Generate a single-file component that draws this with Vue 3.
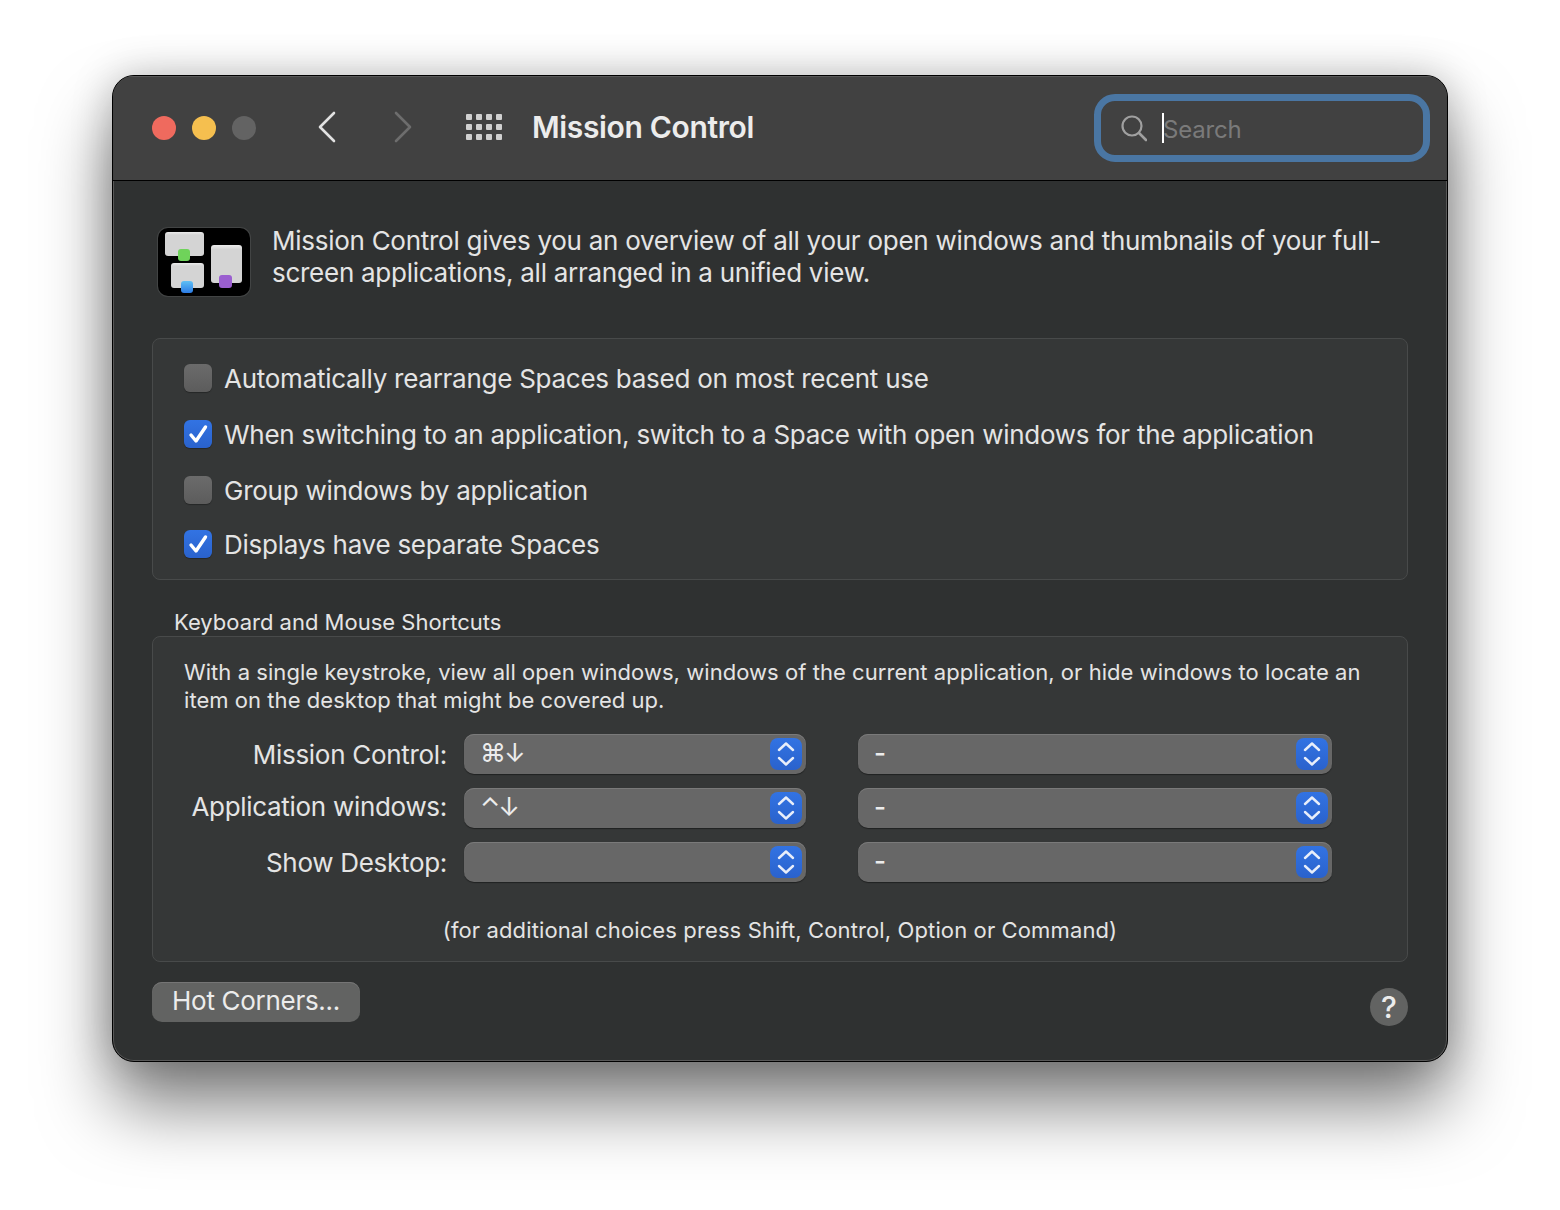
<script setup>
const checks = [
  { label: 'Automatically rearrange Spaces based on most recent use', on: false },
  { label: 'When switching to an application, switch to a Space with open windows for the application', on: true },
  { label: 'Group windows by application', on: false },
  { label: 'Displays have separate Spaces', on: true }
]

const shortcuts = [
  { label: 'Mission Control:', key: '⌘↓' },
  { label: 'Application windows:', key: '⌃↓' },
  { label: 'Show Desktop:', key: '' }
]
</script>

<template>
  <div class="page">
    <div class="window">
      <header class="titlebar">
        <div class="lights">
          <span class="light red"></span>
          <span class="light yellow"></span>
          <span class="light grey"></span>
        </div>
        <svg class="nav back" width="20" height="32" viewBox="0 0 20 32">
          <path d="M17 2 L3 16 L17 30" fill="none" stroke="#e2e2e2" stroke-width="2.6" stroke-linecap="round" stroke-linejoin="round" />
        </svg>
        <svg class="nav forward" width="20" height="32" viewBox="0 0 20 32">
          <path d="M3 2 L17 16 L3 30" fill="none" stroke="#6d6d6d" stroke-width="2.6" stroke-linecap="round" stroke-linejoin="round" />
        </svg>
        <div class="apps">
          <span v-for="n in 12" :key="n"></span>
        </div>
        <h1>Mission Control</h1>
        <div class="search">
          <svg width="26" height="28" viewBox="0 0 26 28">
            <circle cx="11" cy="12" r="9.5" fill="none" stroke="#a0a0a0" stroke-width="2.2" />
            <path d="M18 19 L25 26" stroke="#a0a0a0" stroke-width="2.6" stroke-linecap="round" />
          </svg>
          <span class="caret"></span>
          <span class="placeholder">Search</span>
        </div>
      </header>

      <main class="content">
        <section class="intro">
          <div class="pane-icon">
            <span class="win w1"><i class="dot green"></i></span>
            <span class="win w2"><i class="dot blue"></i></span>
            <span class="win w3"><i class="dot purple"></i></span>
          </div>
          <p>Mission Control gives you an overview of all your open windows and thumbnails of your full-<br>screen applications, all arranged in a unified view.</p>
        </section>

        <section class="box options">
          <label v-for="c in checks" :key="c.label" class="check-row">
            <span class="check" :class="{ on: c.on }">
              <svg v-if="c.on" width="24" height="24" viewBox="0 0 24 24">
                <path d="M5 13 L10 19 L19.500 5" fill="none" stroke="#fff" stroke-width="3.4" stroke-linecap="round" stroke-linejoin="round" />
              </svg>
            </span>
            <span class="check-label">{{ c.label }}</span>
          </label>
        </section>

        <div class="section-title">Keyboard and Mouse Shortcuts</div>

        <section class="box shortcuts">
          <p class="help-text">With a single keystroke, view all open windows, windows of the current application, or hide windows to locate an item on the desktop that might be covered up.</p>
          <div class="rows">
            <div v-for="s in shortcuts" :key="s.label" class="short-row">
              <span class="short-label">{{ s.label }}</span>
              <div class="select first">
                <span class="key">{{ s.key }}</span>
                <span class="stepper">
                  <svg width="20" height="28" viewBox="0 0 20 28">
                    <path d="M3 10 L10 3.5 L17 10 M3 18 L10 24.500 L17 18" fill="none" stroke="#e8eefa" stroke-width="2.4" stroke-linecap="round" stroke-linejoin="round" />
                  </svg>
                </span>
              </div>
              <div class="select second">
                <span class="key dash">-</span>
                <span class="stepper">
                  <svg width="20" height="28" viewBox="0 0 20 28">
                    <path d="M3 10 L10 3.5 L17 10 M3 18 L10 24.500 L17 18" fill="none" stroke="#e8eefa" stroke-width="2.4" stroke-linecap="round" stroke-linejoin="round" />
                  </svg>
                </span>
              </div>
            </div>
          </div>
          <p class="note">(for additional choices press Shift, Control, Option or Command)</p>
        </section>

        <footer class="actions">
          <button class="hot">Hot Corners...</button>
          <button class="help">?</button>
        </footer>
      </main>
    </div>
  </div>
</template>

<style>
body {
  background: #fff;
}
</style>

<style scoped>
.page {
  padding: 75px 112px 148px;
  font-family: Inter, "Liberation Sans", sans-serif;
  color: #e4e4e4;
}

.window {
  height: 987px;
  box-sizing: border-box;
  background: #2f3131;
  border-radius: 22px;
  border: 1px solid #000;
  box-shadow: inset 0 0 0 1px #585858, 0 44px 70px rgba(0, 0, 0, 0.5), 0 0 40px rgba(0, 0, 0, 0.22);
  overflow: hidden;
}

.titlebar {
  height: 104px;
  display: flex;
  align-items: center;
  background: #414141;
  border-bottom: 1px solid #000;
  box-shadow: inset 0 1px 0 #585858;
  padding-left: 39px;
}

.lights {
  display: flex;
  gap: 16px;
}

.light {
  width: 24px;
  height: 24px;
  border-radius: 50%;
}

.red { background: #ef6a5e; }
.yellow { background: #f5bf4f; }
.grey { background: #636363; }

.nav {
  flex: none;
  margin-bottom: 2px;
}

.back { margin-left: 61px; }
.forward { margin-left: 56px; }

.apps {
  display: grid;
  grid-template-columns: repeat(4, 6px);
  grid-auto-rows: 6px;
  gap: 4px;
  margin: 0 0 2px 53px;
}

.apps span {
  background: #d0d0d0;
  border-radius: 1px;
}

h1 {
  margin: 0 0 2px 30px;
  font-size: 30px;
  font-weight: 600;
  letter-spacing: -0.35px;
  color: #ececec;
}

.search {
  margin-left: auto;
  margin-right: 17px;
  width: 336px;
  height: 68px;
  box-sizing: border-box;
  border: 7px solid #4a76a3;
  border-radius: 21px;
  display: flex;
  align-items: center;
  padding-left: 20px;
}

.caret {
  width: 2px;
  height: 30px;
  background: #fff;
  margin-left: 15px;
}

.placeholder {
  font-size: 24px;
  letter-spacing: -0.2px;
  color: #7a7a7a;
  margin: 2px 0 0 -1px;
}

.content {
  padding: 0 39px;
}

.intro {
  display: flex;
  gap: 22px;
  padding-top: 44px;
  margin-left: 6px;
  height: 157px;
  box-sizing: border-box;
}

.intro p {
  margin: 0;
  font-size: 26px;
  line-height: 32px;
  letter-spacing: -0.27px;
  white-space: nowrap;
}

.pane-icon {
  position: relative;
  flex: none;
  width: 92px;
  height: 68px;
  background: #000;
  border-radius: 10px;
  margin-top: 3px;
  box-shadow: 0 0 0 1px #424444;
}

.win {
  position: absolute;
  background: linear-gradient(#ececec, #d4d4d4 12%);
  border-radius: 3px;
}

.w1 { left: 7px; top: 4px; width: 39px; height: 24px; }
.w2 { left: 13px; top: 35px; width: 33px; height: 25px; }
.w3 { left: 53px; top: 17px; width: 31px; height: 38px; }

.dot {
  position: absolute;
  width: 12px;
  height: 12px;
  border-radius: 3px;
}

.green { background: #6fd35a; left: 13px; top: 17px; }
.blue { background: linear-gradient(#5fc0f5, #2c7be5); left: 10px; top: 18px; }
.purple { background: #9b5fd0; left: 8px; top: 30px; width: 13px; height: 13px; }

.box {
  border: 1px solid #484a4a;
  border-radius: 8px;
  background: #353737;
  box-sizing: border-box;
}

.options {
  height: 242px;
  padding: 11px 31px 0;
}

.check-row {
  display: flex;
  align-items: center;
  gap: 12px;
  height: 56px;
}

.check-row:nth-child(4) {
  height: 52px;
}

.check {
  width: 28px;
  height: 28px;
  border-radius: 6px;
  background: linear-gradient(#6b6b6b, #5c5c5c);
  box-shadow: 0 1px 1px rgba(0, 0, 0, 0.3);
  display: flex;
  align-items: center;
  justify-content: center;
}

.check.on {
  background: linear-gradient(#3273e3, #2a62cc);
}

.check-label {
  font-size: 26px;
  letter-spacing: -0.26px;
  white-space: nowrap;
}

.section-title {
  font-size: 22px;
  line-height: 28px;
  margin: 28px 0 0 22px;
  height: 28px;
}

.shortcuts {
  height: 326px;
  padding: 21px 31px 0;
}

.help-text {
  margin: 0;
  font-size: 22px;
  line-height: 28px;
  letter-spacing: 0.05px;
}

.rows {
  margin-top: 20px;
  display: flex;
  flex-direction: column;
  gap: 14px;
}

.short-row {
  display: flex;
  align-items: center;
  height: 40px;
}

.short-row:nth-child(2) .short-label {
  margin-top: -4px;
}

.short-label {
  width: 263px;
  text-align: right;
  font-size: 26px;
  letter-spacing: -0.3px;
  white-space: nowrap;
}

.select {
  display: flex;
  align-items: center;
  justify-content: space-between;
  height: 40px;
  background: #676767;
  border-radius: 10px;
  box-sizing: border-box;
  padding: 0 4px 0 16px;
  box-shadow: inset 0 1px 0 #7a7a7a, 0 1px 1px rgba(0, 0, 0, 0.4);
}

.first {
  width: 342px;
  margin-left: 17px;
}

.second {
  width: 474px;
  margin-left: 52px;
}

.key {
  font-family: Inter, "DejaVu Sans", sans-serif;
  font-size: 26px;
  line-height: 36px;
  letter-spacing: -2px;
  margin-bottom: 2px;
  color: #ececec;
}

.dash {
  font-size: 26px;
  font-weight: 500;
}

.stepper {
  width: 32px;
  height: 32px;
  border-radius: 8px;
  background: linear-gradient(#3273e3, #2a62cc);
  display: flex;
  align-items: center;
  justify-content: center;
}

.note {
  margin: 34px 0 0;
  text-align: center;
  font-size: 22px;
  line-height: 28px;
  letter-spacing: 0.12px;
}

.actions {
  display: flex;
  justify-content: space-between;
  padding-top: 20px;
}

button {
  font-family: inherit;
  border: none;
  color: #ececec;
  background: #626362;
  padding: 0;
}

.hot {
  width: 208px;
  height: 40px;
  border-radius: 10px;
  font-size: 26px;
  letter-spacing: -0.3px;
  padding-bottom: 3px;
  box-shadow: inset 0 1px 0 #757575;
}

.help {
  width: 38px;
  height: 38px;
  border-radius: 50%;
  margin-top: 6px;
  font-size: 30px;
  font-weight: 500;
}
</style>
